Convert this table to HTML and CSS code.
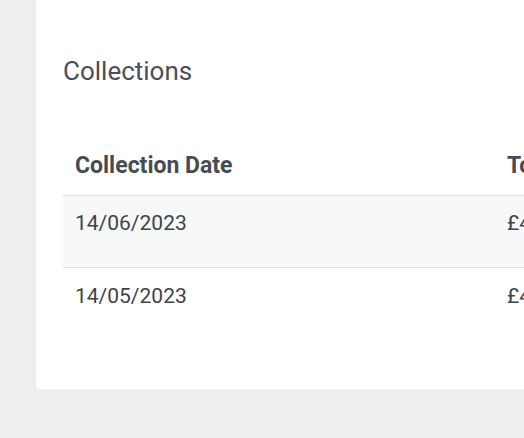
FILE: index.html
```html
<!DOCTYPE html>
<html>
<head>
<meta charset="utf-8">
<link rel="stylesheet" href="styles.css">
</head>
<body>
<div class="page">
  <section class="card">
    <h2 class="title">Collections</h2>
    <table class="table">
      <thead>
        <tr><th class="col-date">Collection Date</th><th>Total</th></tr>
      </thead>
      <tbody>
        <tr class="striped"><td>14/06/2023</td><td>£45.00</td></tr>
        <tr><td>14/05/2023</td><td>£45.00</td></tr>
      </tbody>
    </table>
  </section>
</div>
</body>
</html>
```
FILE: styles.css
```css
html, body {
  margin: 0;
  padding: 0;
  background: #eeeeee;
  overflow: hidden;
}
body {
  font-family: Roboto, "Liberation Sans", sans-serif;
  color: #4a4f56;
}
.page {
  padding-left: 36px;
  height: 438px;
}
.card {
  background: #ffffff;
  border-radius: 0 0 4px 4px;
  padding: 55px 0 49px 27px;
  width: 800px;
}
.title {
  margin: 0 0 52px 0;
  font-size: 26px;
  font-weight: 400;
  line-height: 32px;
  color: #4a4f56;
}
.table {
  border-collapse: collapse;
  width: 800px;
  font-size: 21px;
}
.table th {
  text-align: left;
  font-size: 23px;
  font-weight: 700;
  padding: 13px 12px 15px 12px;
  line-height: 28px;
  color: #474c53;
  border-bottom: 1px solid #dde2e8;
}
.table .col-date {
  width: 408px;
}
.table td {
  padding: 13px 12px 30px 12px;
  line-height: 28px;
  color: #3f444b;
  vertical-align: top;
}
.table tbody tr:last-child td {
  padding-top: 14px;
}
.table tr.striped td {
  background: #f7f8fa;
  border-bottom: 1px solid #dde2e8;
}
```
